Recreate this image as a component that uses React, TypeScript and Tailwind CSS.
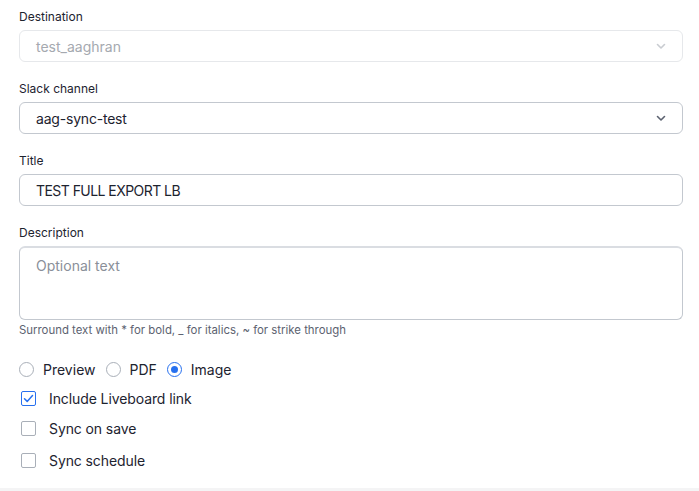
import { useState } from "react";

const Chevron = ({ className }: { className: string }) => (
  <svg width="12" height="12" viewBox="0 0 12 12" className={className}>
    <path d="M2.5 4.5 6 8l3.5-3.5" fill="none" stroke="currentColor" strokeWidth="1.6" strokeLinecap="round" strokeLinejoin="round" />
  </svg>
);

const Label = ({ children }: { children: React.ReactNode }) => (
  <div className="text-[12px] leading-4 text-[#1d232f] mb-[5px]">{children}</div>
);

const Radio = ({ checked, label }: { checked: boolean; label: string }) => (
  <label className="flex items-center gap-[9px] mr-[10px]">
    <span
      className={
        "w-[15px] h-[15px] rounded-full border flex items-center justify-center " +
        (checked ? "border-[#2770ef]" : "border-[#a9afb8]")
      }>
      {checked && <span className="w-[7px] h-[7px] rounded-full bg-[#2770ef]" />}
    </span>
    <span className="text-[14px] text-[#1d232f]">{label}</span>
  </label>
);

const Checkbox = ({ checked, label }: { checked: boolean; label: string }) => (
  <label className="flex items-center gap-[13px] pl-[2px]">
    <span
      className={
        "w-[15px] h-[15px] rounded-[2px] border flex items-center justify-center " +
        (checked ? "border-[#2770ef]" : "border-[#a9afb8]")
      }>
      {checked && (
        <svg width="11" height="11" viewBox="0 0 11 11">
          <path d="M1.5 5.8 4.2 8.4 9.5 2.6" fill="none" stroke="#2770ef" strokeWidth="1.5" strokeLinecap="round" strokeLinejoin="round" />
        </svg>
      )}
    </span>
    <span className="text-[14px] tracking-[-0.1px] text-[#1d232f]">{label}</span>
  </label>
);

export default function App() {
  const [title] = useState("TEST FULL EXPORT LB");

  return (
    <div className="w-[699px] h-[491px] bg-white flex flex-col [font-family:Inter,'Liberation_Sans',sans-serif] overflow-hidden">
      <div className="flex-1 pl-[19px] pr-[16px] pt-[9px] flex flex-col">
        <Label>Destination</Label>
        <div className="h-8 rounded-md border border-[#e6e8eb] flex items-center justify-between pl-4 pr-[15px]">
          <span className="text-[14px] text-[#a5a9b0]">test_aaghran</span>
          <Chevron className="text-[#c9ccd1]" />
        </div>

        <div className="mt-[19px]">
          <Label>Slack channel</Label>
          <div className="h-8 rounded-md border border-[#c3c8cf] flex items-center justify-between pl-4 pr-[15px]">
            <span className="text-[14px] tracking-[-0.2px] text-[#1d232f]">aag-sync-test</span>
            <Chevron className="text-[#5c6270]" />
          </div>
        </div>

        <div className="mt-[19px]">
          <Label>Title</Label>
          <div className="h-8 rounded-md border border-[#c3c8cf] flex items-center pl-4">
            <span className="text-[14px] tracking-[-0.55px] text-[#1d232f]">{title}</span>
          </div>
        </div>

        <div className="mt-[19px]">
          <Label>Description</Label>
          <div className="h-[74px] rounded-md border border-[#c3c8cf] border-t-[#dadde2] border-t-2 pl-4 pt-[5px]">
            <span className="text-[14px] text-[#8a8f99]">Optional text</span>
          </div>
          <div className="text-[11.4px] leading-4 text-[#5c6270] mt-[2px]">
            Surround text with * for bold, _ for italics, ~ for strike through
          </div>
        </div>

        <div className="flex items-center mt-[21px] h-5">
          <Radio checked={false} label="Preview" />
          <Radio checked={false} label="PDF" />
          <Radio checked label="Image" />
        </div>

        <div className="flex flex-col mt-[10px]">
          <div className="h-[18px] flex items-center"><Checkbox checked label="Include Liveboard link" /></div>
          <div className="h-[18px] mt-[12px] flex items-center"><Checkbox checked={false} label="Sync on save" /></div>
          <div className="h-[18px] mt-[14px] flex items-center"><Checkbox checked={false} label="Sync schedule" /></div>
        </div>
      </div>
      <div className="h-[3px] bg-[#f4f4f5]" />
    </div>
  );
}
